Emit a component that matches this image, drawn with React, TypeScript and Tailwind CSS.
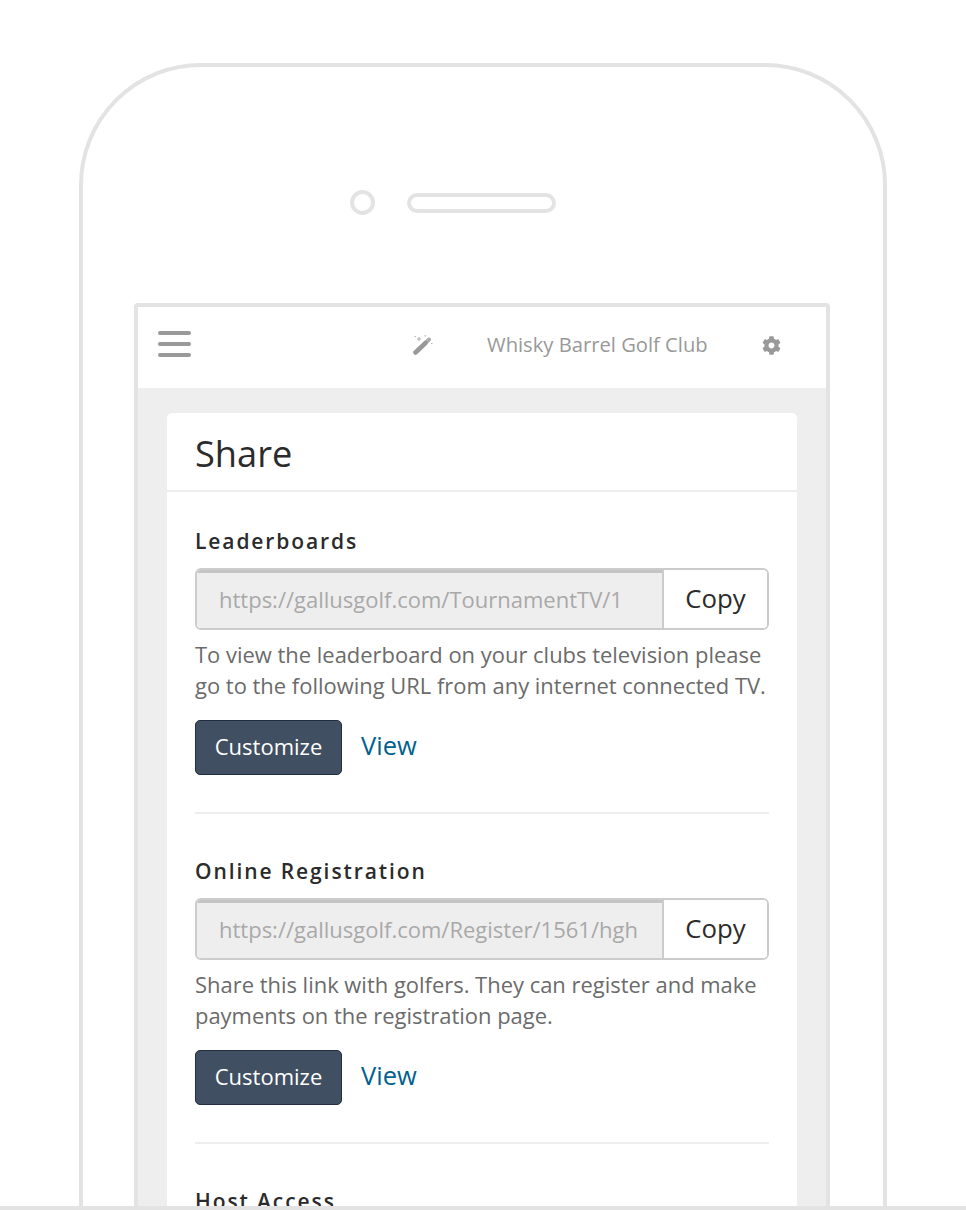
import React from "react";
import { FaCog } from "react-icons/fa";

interface ShareSectionProps {
  title: string;
  url: string;
  description: React.ReactNode;
}

const ShareSection: React.FC<ShareSectionProps> = ({ title, url, description }) => {
  return (
    <section className="border-b-2 border-[#eeeeee] pb-[37px] mb-[43px]">
      <h3 className="text-[21px] leading-[28px] font-semibold tracking-[1.9px] text-[#2b2b2b] mb-[13px]">
        {title}
      </h3>
      <div className="flex h-[62px] border-2 border-[#cccccc] rounded-[6px] overflow-hidden">
        <div className="flex-1 min-w-0 flex items-center pl-[22px] pr-[22px] pb-[2px] bg-[#eeeeee] border-t-[3px] border-[#c4c4c4] text-[22px] text-[#a9a9a9] whitespace-nowrap overflow-hidden">
          {url}
        </div>
        <button className="w-[105px] pb-[2px] border-l-2 border-[#cccccc] bg-white text-[25.8px] text-[#2b2b2b]">
          Copy
        </button>
      </div>
      <p className="mt-[9px] text-[21.95px] leading-[31px] text-[#6b6b6b]">
        {description}
      </p>
      <div className="mt-[19px] flex items-center gap-[19px]">
        <button className="w-[147px] h-[55px] pb-[2px] rounded-[5px] bg-[#414f62] border border-[#222e40] text-[22px] text-white">
          Customize
        </button>
        <a className="text-[25.5px] leading-[36px] mb-[6px] text-[#00618f]">View</a>
      </div>
    </section>
  );
};

const WandIcon = () => (
  <svg width="20" height="20" viewBox="0 0 20 20" className="ml-[222px] mt-[2px] text-[#999999]">
    <path d="M2.5 17.5 12.5 8" stroke="currentColor" strokeWidth="4.5" strokeLinecap="round" />
    <path d="M14 6.5 16 4.5" stroke="currentColor" strokeWidth="4" opacity="0.8" strokeLinecap="round" />
    <path d="M6 2v4M4 4h4" stroke="currentColor" strokeWidth="1" opacity="0.8" />
    <path d="M1.5 1.5h1.5M11.5 .8h1.5M18 8.5h1.5" stroke="currentColor" strokeWidth="1.2" opacity="0.7" />
  </svg>
);

export default function App() {
  return (
    <div className="w-[966px] h-[1210px] flex flex-col overflow-hidden bg-white font-['Open_Sans',sans-serif]">
      <div className="flex-1 min-h-0 overflow-hidden pt-[63px] pl-[79px]">
        <div className="w-[808px] h-[1400px] border-4 border-[#e3e3e3] rounded-t-[122px]">
          <div className="flex items-center h-[236px] pt-[35px] pl-[267px]">
            <div className="w-[25px] h-[25px] rounded-full border-4 border-[#e3e3e3]" />
            <div className="ml-[32px] w-[149px] h-[20px] rounded-[10px] border-4 border-[#e3e3e3]" />
          </div>
          <div className="ml-[51px] w-[696px] border-4 border-[#e3e3e3] rounded-t-[4px] bg-[#eeeeee]">
            <header className="h-[81px] bg-white flex items-center pl-[20px] pb-[7px]">
              <div className="w-[33px] flex flex-col gap-[7px]">
                <span className="h-[4px] rounded-full bg-[#999999]" />
                <span className="h-[4px] rounded-full bg-[#999999]" />
                <span className="h-[4px] rounded-full bg-[#999999]" />
              </div>
              <WandIcon />
              <span className="ml-[54px] mt-[1px] text-[20.2px] text-[#999999]">Whisky Barrel Golf Club</span>
              <FaCog className="ml-[54px] mt-[2px] text-[#999999]" size={19} />
            </header>
            <main className="pt-[25px] px-[29px]">
              <div className="w-[630px] bg-white rounded-t-[5px]">
                <div className="h-[79px] border-b-2 border-[#eeeeee] flex items-center pt-[3px] px-[28px]">
                  <h2 className="text-[36.2px] text-[#2b2b2b]">Share</h2>
                </div>
                <div className="pt-[35px] px-[28px]">
                  <ShareSection
                    title="Leaderboards"
                    url="https://gallusgolf.com/TournamentTV/1"
                    description="To view the leaderboard on your clubs television please go to the following URL from any internet connected TV."
                  />
                  <ShareSection
                    title="Online Registration"
                    url="https://gallusgolf.com/Register/1561/hgh"
                    description="Share this link with golfers. They can register and make payments on the registration page."
                  />
                  <h3 className="text-[21px] leading-[28px] font-semibold tracking-[1.9px] text-[#2b2b2b]">
                    Host Access
                  </h3>
                </div>
              </div>
            </main>
          </div>
        </div>
      </div>
      <div className="h-[4px] bg-[#e3e3e3]" />
    </div>
  );
}
